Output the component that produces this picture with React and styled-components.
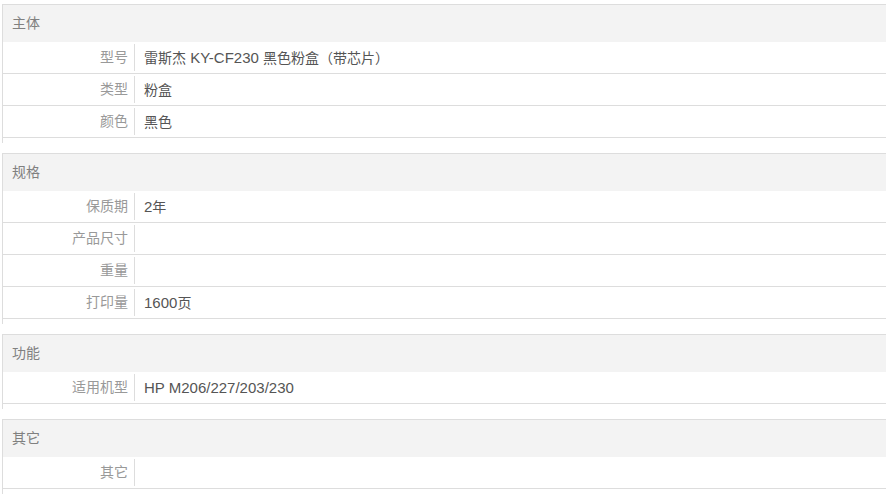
import React from "react";
import styled, { createGlobalStyle } from "styled-components";

const GlobalStyle = createGlobalStyle`
  body {
    margin: 0;
    background: #ffffff;
    font-family: "Liberation Sans", "Noto Sans CJK SC", sans-serif;
  }
`;

const Page = styled.div`
  padding: 4px 5px 0 2px;
`;

const Section = styled.div`
  border-top: 1px solid #dddddd;
  border-left: 1px solid #dddddd;
  padding-bottom: 5px;
  margin-bottom: 10px;
`;

const Header = styled.div`
  height: 37px;
  line-height: 36px;
  background: #f3f3f3;
  padding-left: 9px;
  font-size: 14px;
  color: #808080;
`;

const Row = styled.div`
  display: flex;
  align-items: center;
  height: 31px;
  border-bottom: 1px solid #dddddd;
`;

const Label = styled.div`
  width: 125px;
  height: 27px;
  line-height: 26px;
  padding-right: 6px;
  text-align: right;
  border-right: 1px solid #dddddd;
  font-size: 14px;
  color: #999999;
`;

const Value = styled.div`
  padding-left: 9px;
  line-height: 26px;
  font-size: 14px;
  color: #555555;
`;

const Latin = styled.span`
  font-size: 15px;
`;

const sections = [
  {
    title: "主体",
    rows: [
      ["型号", "雷斯杰 KY-CF230 黑色粉盒（带芯片）"],
      ["类型", "粉盒"],
      ["颜色", "黑色"],
    ],
  },
  {
    title: "规格",
    rows: [
      ["保质期", "2年"],
      ["产品尺寸", ""],
      ["重量", ""],
      ["打印量", "1600页"],
    ],
  },
  {
    title: "功能",
    rows: [["适用机型", "HP M206/227/203/230"]],
  },
  {
    title: "其它",
    rows: [["其它", ""]],
  },
];

// latin runs are a touch larger than the CJK glyphs in the original
function Mixed({ text }) {
  const parts = text.split(/([\x20-\x7e]+)/).filter(Boolean);
  return parts.map((p, i) =>
    /^[\x20-\x7e]+$/.test(p) ? <Latin key={i}>{p}</Latin> : <span key={i}>{p}</span>
  );
}

export default function App() {
  return (
    <Page>
      <GlobalStyle />
      {sections.map((s) => (
        <Section key={s.title}>
          <Header>{s.title}</Header>
          {s.rows.map(([k, v]) => (
            <Row key={k}>
              <Label>{k}</Label>
              <Value>
                <Mixed text={v} />
              </Value>
            </Row>
          ))}
        </Section>
      ))}
    </Page>
  );
}
